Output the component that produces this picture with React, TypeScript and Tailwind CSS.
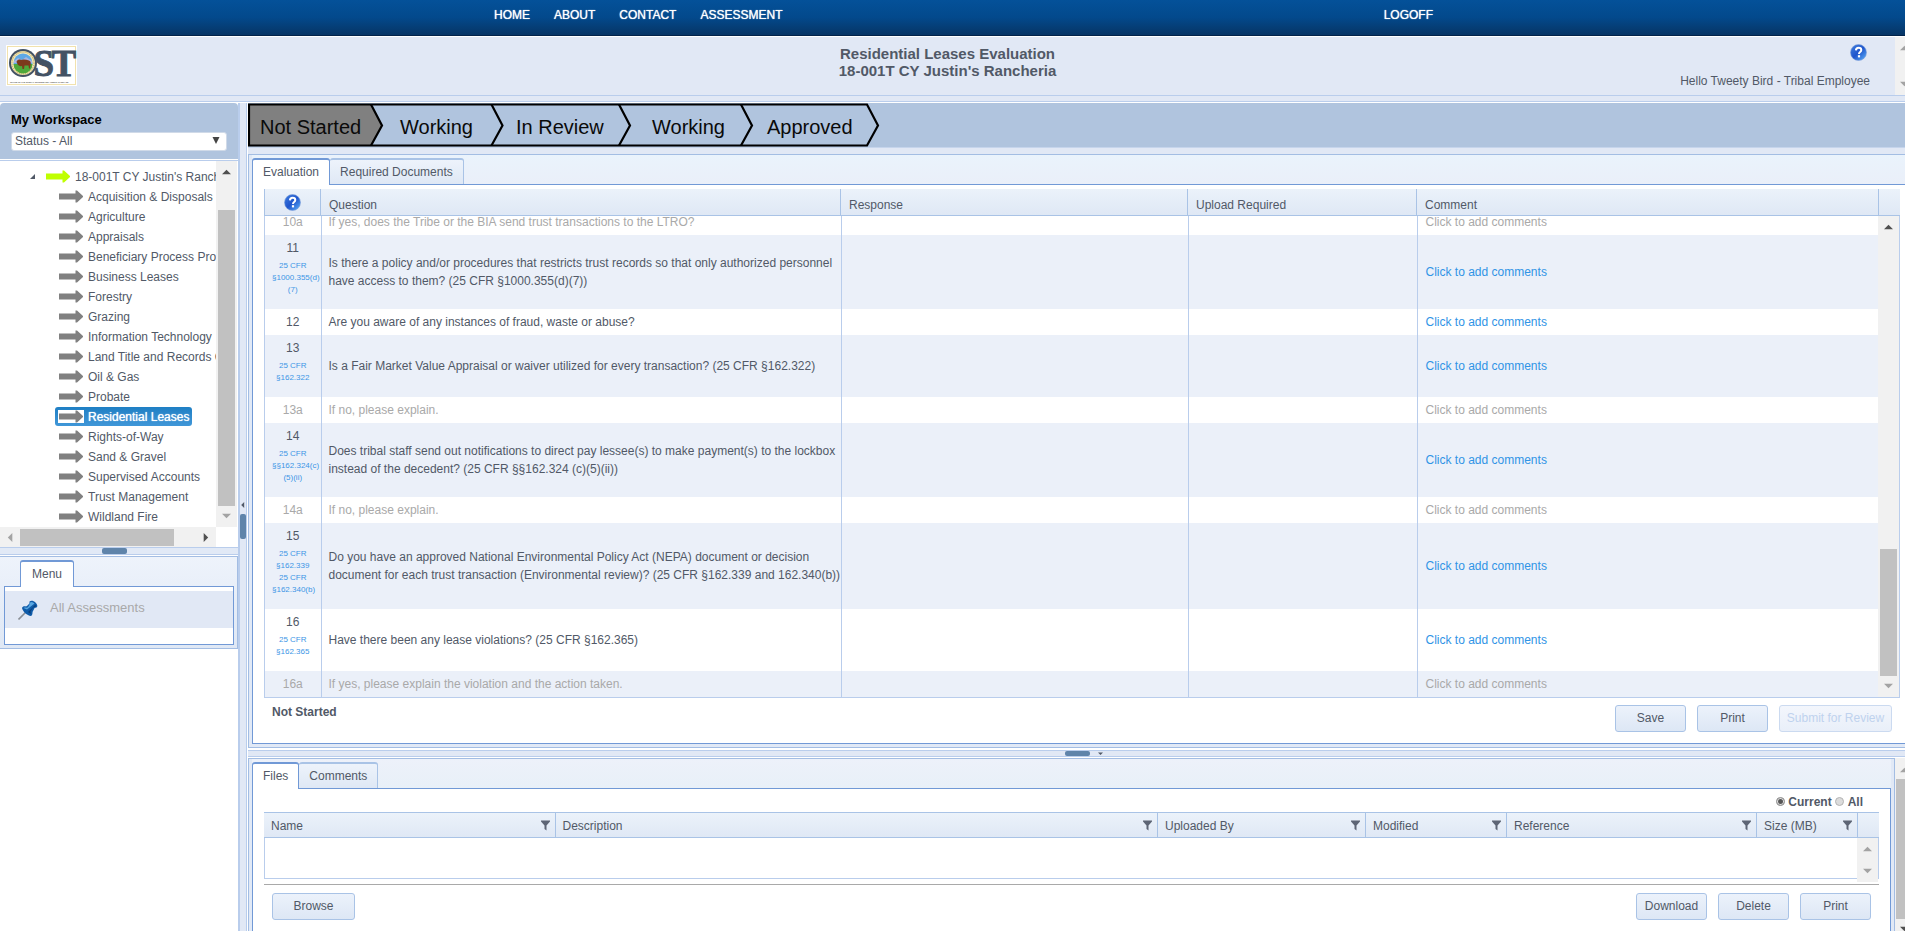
import React from "react";

const FONT = "font-['Liberation_Sans',Arial,sans-serif]";

const sections = [
  "Acquisition & Disposals",
  "Agriculture",
  "Appraisals",
  "Beneficiary Process Programs",
  "Business Leases",
  "Forestry",
  "Grazing",
  "Information Technology",
  "Land Title and Records Office",
  "Oil & Gas",
  "Probate",
  "Residential Leases",
  "Rights-of-Way",
  "Sand & Gravel",
  "Supervised Accounts",
  "Trust Management",
  "Wildland Fire",
];

type Row = { no: string; refs?: string[]; text: string; muted?: boolean; shaded?: boolean };

const rows: Row[] = [
  { no: "10a", text: "If yes, does the Tribe or the BIA send trust transactions to the LTRO?", muted: true },
  {
    no: "11",
    refs: ["25 CFR", "§1000.355(d)", "(7)"],
    text: "Is there a policy and/or procedures that restricts trust records so that only authorized personnel\nhave access to them? (25 CFR §1000.355(d)(7))",
    shaded: true,
  },
  { no: "12", text: "Are you aware of any instances of fraud, waste or abuse?" },
  {
    no: "13",
    refs: ["25 CFR", "§162.322"],
    text: "Is a Fair Market Value Appraisal or waiver utilized for every transaction? (25 CFR §162.322)",
    shaded: true,
  },
  { no: "13a", text: "If no, please explain.", muted: true },
  {
    no: "14",
    refs: ["25 CFR", "§§162.324(c)", "(5)(ii)"],
    text: "Does tribal staff send out notifications to direct pay lessee(s) to make payment(s) to the lockbox\ninstead of the decedent? (25 CFR §§162.324 (c)(5)(ii))",
    shaded: true,
  },
  { no: "14a", text: "If no, please explain.", muted: true },
  {
    no: "15",
    refs: ["25 CFR", "§162.339", "25 CFR", "§162.340(b)"],
    text: "Do you have an approved National Environmental Policy Act (NEPA) document or decision\ndocument for each trust transaction (Environmental review)? (25 CFR §162.339 and 162.340(b))",
    shaded: true,
  },
  { no: "16", refs: ["25 CFR", "§162.365"], text: "Have there been any lease violations? (25 CFR §162.365)" },
  { no: "16a", text: "If yes, please explain the violation and the action taken.", muted: true, shaded: true },
];

function HelpIcon() {
  return (
    <svg width="17" height="17" viewBox="0 0 17 17" role="img" aria-label="Help">
      <defs>
        <linearGradient id="help" x1="0" y1="0" x2="1" y2="1">
          <stop offset="0" stopColor="#3f7fe0" />
          <stop offset="0.5" stopColor="#1f55cc" />
          <stop offset="1" stopColor="#5fb4fb" />
        </linearGradient>
      </defs>
      <circle cx="8.5" cy="8.5" r="8" fill="url(#help)" stroke="#7f9fd8" strokeWidth="0.6" />
      <path
        d="M5.9 6.4c.1-1.7 1.2-2.600 2.700-2.600 1.600 0 2.700.9 2.700 2.300 0 1.900-2.300 1.900-2.300 3.800"
        fill="none"
        stroke="#fff"
        strokeWidth="2"
      />
      <rect x="7.900" y="11.200" width="2.200" height="2.200" fill="#fff" />
    </svg>
  );
}

function Arrow({ dir, color = "#a3a3a3", size = 9 }: { dir: "up" | "down" | "left" | "right"; color?: string; size?: number }) {
  const points = {
    up: "0,7 5,2 10,7",
    down: "0,3 5,8 10,3",
    left: "7,0 2,5 7,10",
    right: "3,0 8,5 3,10",
  }[dir];
  return (
    <svg width={size} height={size} viewBox="0 0 10 10" className="shrink-0" aria-hidden="true">
      <polygon points={points} fill={color} />
    </svg>
  );
}

function TreeArrow({ color }: { color: string }) {
  return (
    <svg width="26" height="13" viewBox="0 0 26 13" className="shrink-0 bg-white" aria-hidden="true">
      <path d="M1 3.500H17.500V0.500H19L25 6V7L19 12.500H17.500V9.500H1Z" fill={color} />
    </svg>
  );
}

function Funnel() {
  return (
    <svg width="9" height="11" viewBox="0 0 9 11" aria-hidden="true">
      <path d="M0 0.500H9V1.500L5.500 5.500V10.500L3.500 9V5.500L0 1.500Z" fill="#5d6575" />
    </svg>
  );
}

function Logo() {
  return (
    <svg width="71" height="41" viewBox="0 0 71 41" role="img" aria-label="Office of the Special Trustee">
      <rect width="71" height="41" fill="#fff" />
      <rect x="1.500" y="1.500" width="68" height="38" fill="#fff" stroke="#f1e2ae" />
      <g fill="#435264" stroke="#435264" strokeWidth="0.900" fontFamily="'Liberation Serif', serif" fontWeight="bold" fontSize="37">
        <text x="27.500" y="31">
          S
        </text>
        <text x="45.500" y="31">
          T
        </text>
      </g>
      <circle cx="17" cy="18" r="14" fill="#435264" />
      <circle cx="17" cy="18" r="12" fill="#f3e7b4" />
      <circle cx="17" cy="18" r="11" fill="none" stroke="#b89a4a" strokeWidth="1" strokeDasharray="1 1" />
      <circle cx="17" cy="18" r="9.500" fill="#5fa9e6" />
      <path d="M8 16l4-3 4 2 4-3 6 4v2H8z" fill="#a9b6e0" />
      <path d="M7.500 19H26.500A9.500 9.500 0 0 1 7.500 19Z" fill="#4fa83a" />
      <path
        d="M10.500 17c.5-2 2.500-3 4.500-2 2-1 5-.5 8 .5 2 .5 2 3 1.500 5l-.5 3h-1l-.5-3h-4l-.5 3.500h-1.500l-.5-3c-2 .5-3-.5-4-1z"
        fill="#7c3a1c"
      />
      <text x="4" y="37.500" fontSize="2" fill="#222" fontFamily="'Liberation Sans', sans-serif">
        OFFICE OF THE SPECIAL TRUSTEE FOR AMERICAN INDIANS
      </text>
    </svg>
  );
}

function Pin() {
  return (
    <svg width="20" height="20" viewBox="0 0 20 20" className="shrink-0" aria-hidden="true">
      <path d="M0.500 19.500L8 12" stroke="#8a8f96" strokeWidth="1.600" />
      <path d="M11.500 1.500C13 0 15.500 0.500 17.500 2.500S20 6.500 18.500 7.500L16.500 8C16 9.500 14.500 11.500 14.500 12.500C14.500 14.500 14 15.500 13 16C9 15.500 5 12 4 8C4.500 6.500 6 6 8 6.500C9 6 10.500 4.500 11.500 3.500Z" fill="#0f5ba8" />
      <path d="M12 2.500C13.500 1.500 15 2 16.500 3.500L14 5.500L9 9.500L5.500 8C7 7 8.500 8 9.500 7.500C10.500 6.500 11.500 5 12 2.500Z" fill="#58a7e2" />
      <path d="M17.500 4.500L18 6.500L15 7.500L12.500 11.500L13 14L10 12Z" fill="#093f7c" />
    </svg>
  );
}

const chevrons = [
  { label: "Not Started", x: 12 },
  { label: "Working", x: 152 },
  { label: "In Review", x: 268 },
  { label: "Working", x: 404 },
  { label: "Approved", x: 519 },
];

function Workflow() {
  return (
    <svg width="632" height="44" viewBox="0 0 632 44" role="img" aria-label="Workflow status">
      <path d="M1 1.500H123L134 22.500L123 42.500H1Z" fill="#808080" />
      <g fill="none" stroke="#000" strokeWidth="2.200">
        <path d="M1 1.500H619L630 22.500L619 42.500H1Z" />
        <path d="M123 1.500L134 22.500L123 42.500" />
        <path d="M243.500 1.500L254.500 22.500L243.500 42.500" />
        <path d="M371 1.500L382 22.500L371 42.500" />
        <path d="M493 1.500L504 22.500L493 42.500" />
      </g>
      <g fontFamily="'Liberation Sans', Arial, sans-serif" fontSize="20" fill="#0a0a0a">
        {chevrons.map((c) => (
          <text key={c.x} x={c.x} y="31">
            {c.label}
          </text>
        ))}
      </g>
    </svg>
  );
}

function Button({ children, className = "w-[71px]", disabled }: { children: React.ReactNode; className?: string; disabled?: boolean }) {
  return (
    <button
      type="button"
      disabled={disabled}
      className={`h-[27px] rounded-[3px] border border-[#a9c3e6] bg-gradient-to-b from-[#ecf2fb] to-[#dde7f5] pb-px text-xs whitespace-nowrap disabled:border-[#cbdaf0] disabled:from-[#f3f6fc] disabled:to-[#e9eff9] disabled:text-[#bfd2ee] ${className}`}
    >
      {children}
    </button>
  );
}

function Tab({ children, active }: { children: React.ReactNode; active?: boolean }) {
  return (
    <button
      type="button"
      role="tab"
      aria-selected={!!active}
      className={
        active
          ? "-mb-px h-[27px] rounded-t-[3px] border border-t-2 border-b-0 border-[#7199d6] bg-white px-[10px] pb-[2px] text-xs"
          : "h-[26px] rounded-t-[3px] border border-t-2 border-b-0 border-l-0 border-[#a9c3e6] bg-gradient-to-b from-[#edf3fb] to-[#dfe8f5] px-[10px] pb-px text-xs"
      }
    >
      {children}
    </button>
  );
}

function QuestionCols() {
  return (
    <colgroup>
      <col className="w-[56px]" />
      <col className="w-[520px]" />
      <col className="w-[347px]" />
      <col className="w-[229px]" />
      <col />
    </colgroup>
  );
}

function EvaluationPanel() {
  const th = "border-r border-[#a9c3e6] px-2 pt-[5px] text-left font-normal";
  return (
    <section className="flex flex-col border-t border-b border-l border-[#a3bde3] bg-[#e1e9f6] pb-[3px] pl-[3px]">
      <div role="tablist" className="flex h-[30px] items-end border-b border-[#7199d6] bg-gradient-to-b from-[#eaf3fc] to-[#eaeff9]">
        <Tab active>Evaluation</Tab>
        <Tab>Required Documents</Tab>
      </div>
      <div className="border-b border-l border-[#7199d6] bg-white pt-1 pr-[5px] pl-[11px]">
        <div className="flex border-b border-[#a9c3e6] bg-gradient-to-b from-[#ebf2fa] to-[#dfe8f5]">
          <table className="h-[26px] min-w-0 flex-1 table-fixed border-l border-[#a9c3e6]">
            <QuestionCols />
            <thead>
              <tr>
                <th className="border-r border-[#a9c3e6] p-0">
                  <span className="flex justify-center">
                    <HelpIcon />
                  </span>
                </th>
                <th className={th}>Question</th>
                <th className={th}>Response</th>
                <th className={th}>Upload Required</th>
                <th className={th}>Comment</th>
              </tr>
            </thead>
          </table>
          <div className="w-[21px]" />
        </div>
        <div className="flex h-[482px] border-r border-b border-l border-[#b9cdec]">
          <div className="flex min-w-0 flex-1 flex-col justify-end overflow-hidden">
            <table className="w-full shrink-0 table-fixed leading-[18px]">
              <QuestionCols />
              <tbody>
                {rows.map((r) => {
                  const td = "border-r border-[#b9cdec]";
                  return (
                    <tr key={r.no} className={`${r.shaded ? "bg-[#ebf0f9]" : "bg-white"} ${r.muted ? "text-[#a9a9a9]" : ""}`}>
                      <td className={`${td} px-[7px] py-1 text-center align-top`}>
                        {r.no}
                        {r.refs && (
                          <div className="pt-[3px] pb-[9px] text-[8px] leading-[12px] text-[#3c96e6]">
                            {r.refs.map((ref, i) => (
                              <a key={i} href="#cfr" className="block whitespace-nowrap">
                                {ref}
                              </a>
                            ))}
                          </div>
                        )}
                      </td>
                      <td className={`${td} pl-[7px] whitespace-pre`}>{r.text}</td>
                      <td className={td} />
                      <td className={td} />
                      <td className="px-2">
                        <a href="#comment" className={r.muted ? "text-[#a9a9a9]" : "text-[#3094e6]"}>
                          Click to add comments
                        </a>
                      </td>
                    </tr>
                  );
                })}
              </tbody>
            </table>
          </div>
          <div className="flex w-[21px] flex-col items-center bg-[#f1f1f1] py-[7px]">
            <Arrow dir="up" color="#505050" />
            <div className="flex-1" />
            <div className="mb-[5px] h-[127px] w-[17px] bg-[#c1c1c1]" />
            <Arrow dir="down" />
          </div>
        </div>
        <div className="flex items-start gap-[11px] pt-[7px] pr-2 pb-[11px] pl-2">
          <span className="flex-1 leading-[14px] font-bold">Not Started</span>
          <Button>Save</Button>
          <Button>Print</Button>
          <Button className="w-[113px]" disabled>
            Submit for Review
          </Button>
        </div>
      </div>
    </section>
  );
}

const fileColumns: { name: string; width: string }[] = [
  { name: "Name", width: "w-[291px]" },
  { name: "Description", width: "" },
  { name: "Uploaded By", width: "w-[208px]" },
  { name: "Modified", width: "w-[141px]" },
  { name: "Reference", width: "w-[250px]" },
  { name: "Size (MB)", width: "w-[101px]" },
];

function FilesPanel() {
  return (
    <div className="flex min-h-0 flex-1 overflow-hidden">
      <section className="flex min-w-0 flex-1 flex-col border-t border-r border-l border-[#a3bde3] bg-[#e1e9f6] px-[3px]">
        <div role="tablist" className="flex h-[30px] shrink-0 items-end border-b border-[#7199d6] bg-gradient-to-b from-[#edf1fa] to-[#e8f0f8]">
          <Tab active>Files</Tab>
          <Tab>Comments</Tab>
        </div>
        <div className="flex-1 border-r border-l border-[#7199d6] bg-white pr-[11px] pl-[11px]">
          <div className="flex h-[23px] items-center justify-end pt-[2px] pr-4 font-bold">
            <label className="flex items-center gap-[3px]">
              <input
                type="radio"
                name="scope"
                defaultChecked
                className="h-[9px] w-[9px] appearance-none rounded-full border border-[#a0a0a0] bg-[#555] shadow-[inset_0_0_0_1px_#e4e4e4]"
              />
              Current
            </label>
            <label className="ml-[3px] flex items-center gap-1">
              <input type="radio" name="scope" className="h-[9px] w-[9px] appearance-none rounded-full border border-[#b4b4b4] bg-[#dcdcdc]" />
              All
            </label>
          </div>
          <div className="flex border-t border-b border-[#a9c3e6] bg-gradient-to-b from-[#ebf2fa] to-[#dfe8f5]">
            <table className="h-[24px] min-w-0 flex-1 table-fixed">
              <colgroup>
                {fileColumns.map((c) => (
                  <col key={c.name} className={c.width} />
                ))}
              </colgroup>
              <thead>
                <tr>
                  {fileColumns.map((c) => (
                    <th key={c.name} className="border-r border-[#a9c3e6] p-0 pt-px pr-[5px] pl-[7px] font-normal">
                      <span className="flex items-center justify-between">
                        {c.name}
                        <Funnel />
                      </span>
                    </th>
                  ))}
                </tr>
              </thead>
            </table>
            <div className="w-[21px]" />
          </div>
          <div className="flex h-[41px] justify-end border-r border-b border-l border-[#b9cdec]">
            <div className="flex h-[44px] w-[21px] flex-col items-center justify-between bg-[#f1f1f1] py-[7px]">
              <Arrow dir="up" />
              <Arrow dir="down" />
            </div>
          </div>
          <div className="mt-[5px] flex gap-[11px] border-t border-[#a9a9a9] px-2 pt-2">
            <Button className="w-[83px]">Browse</Button>
            <div className="flex-1" />
            <Button>Download</Button>
            <Button>Delete</Button>
            <Button>Print</Button>
          </div>
        </div>
      </section>
      <div className="flex w-[10px] flex-col overflow-hidden bg-[#f1f1f1] pt-2 pl-[5px]">
        <Arrow dir="up" />
        <div className="mt-1 -ml-1 h-[140px] w-4 shrink-0 bg-[#c1c1c1]" />
        <div className="mt-[5px]">
          <Arrow dir="down" color="#505050" />
        </div>
      </div>
    </div>
  );
}

function Sidebar() {
  return (
    <aside className="flex w-[238px] shrink-0 flex-col bg-white">
      <div className="h-[56px] rounded-t-[4px] bg-[#b0c4de] px-[11px] pt-2">
        <label htmlFor="status" className="block text-[13px] leading-[18px] font-bold text-black">
          My Workspace
        </label>
        <div className="relative mt-[3px]">
          <select id="status" className="block h-[19px] w-full appearance-none rounded-[3px] border border-[#d0dae8] bg-white pl-[3px] text-xs leading-[17px]">
            <option>Status - All</option>
          </select>
          <svg width="8" height="8" viewBox="0 0 8 8" className="pointer-events-none absolute top-[5px] right-[7px]" aria-hidden="true">
            <path d="M0.500 0H7.500L4 7Z" fill="#444" />
          </svg>
        </div>
      </div>
      <div className="mt-px flex h-[367px] border-t border-[#b9cdec]">
        <div className="min-w-0 flex-1 overflow-hidden pt-[5px]">
          <div className="flex h-5 items-center pl-[30px] whitespace-nowrap">
            <svg width="5" height="5" viewBox="0 0 5 5" className="mr-[10px] shrink-0" aria-hidden="true">
              <path d="M5 0V5H0Z" fill="#515967" />
            </svg>
            <TreeArrow color="#bfff00" />
            <span className="pt-[2px] pl-1">18-001T CY Justin's Rancheria</span>
          </div>
          <ul>
            {sections.map((s) => (
              <li key={s} className="flex h-5 items-center pl-[55px] whitespace-nowrap">
                <a
                  href="#section"
                  className={
                    s === "Residential Leases"
                      ? "flex h-[19px] items-center rounded-[3px] bg-gradient-to-b from-[#1e7fc4] to-[#4097d8] px-[3px] text-white [text-shadow:0_0_1px_#fff]"
                      : "flex h-[19px] items-center px-[3px]"
                  }
                >
                  <TreeArrow color="#808080" />
                  <span className="pt-[2px] pl-1">{s}</span>
                </a>
              </li>
            ))}
          </ul>
        </div>
        <div className="mr-px flex w-[21px] shrink-0 flex-col items-center bg-[#f1f1f1] py-[7px]">
          <Arrow dir="up" color="#505050" />
          <div className="mt-[33px] mb-[5px] w-[17px] flex-1 bg-[#c1c1c1]" />
          <Arrow dir="down" />
        </div>
      </div>
      <div className="mr-[22px] flex h-5 items-center bg-[#f1f1f1] px-[6px]">
        <Arrow dir="left" />
        <div className="ml-[5px] h-[17px] w-[154px] bg-[#c1c1c1]" />
        <div className="flex-1" />
        <Arrow dir="right" color="#505050" />
      </div>
      <div className="flex h-2 justify-center border-t border-b border-[#b9cdec] bg-[#e1e9f6] pr-[10px]">
        <div className="w-[25px] rounded-[2px] bg-[#5f84aa]" />
      </div>
      <div className="mt-px border-t border-r border-b border-[#a3bde3] bg-gradient-to-b from-[#eef3fb] to-[#dfe8f5] pt-[3px] pr-[3px] pb-[3px] pl-1">
        <div role="tablist" className="flex pl-4">
          <button
            type="button"
            role="tab"
            aria-selected="true"
            className="relative -mb-px h-[27px] rounded-t-[3px] border border-t-2 border-b-0 border-[#7199d6] bg-white px-[11px] pb-[2px] text-xs"
          >
            Menu
          </button>
        </div>
        <div className="border border-[#7199d6] bg-white pt-1 pb-4">
          <a href="#all" className="flex h-[37px] items-center bg-[#e1e8f5] pl-[13px] text-[13px] text-[#a9a9a9]">
            <Pin />
            <span className="pb-[3px] pl-3">All Assessments</span>
          </a>
        </div>
      </div>
    </aside>
  );
}

export default function App() {
  return (
    <div className={`flex h-screen flex-col overflow-hidden bg-white text-xs text-[#515967] ${FONT}`}>
      <nav className="flex h-9 shrink-0 items-start gap-6 border-b border-[#02234a] bg-gradient-to-b from-[#045199] via-[#03498c] to-[#063565] pt-[7px] pl-[494px] text-white [text-shadow:0_0_1px_#fff]">
        <a href="#home">HOME</a>
        <a href="#about">ABOUT</a>
        <a href="#contact">CONTACT</a>
        <a href="#assessment">ASSESSMENT</a>
        <a href="#logoff" className="mr-[472px] ml-auto">
          LOGOFF
        </a>
      </nav>
      <header className="mt-px flex h-[59px] shrink-0 border-b border-[#b9cdec] bg-[#e1e8f5]">
        <div className="grid flex-1 grid-cols-[1fr_auto_1fr]">
          <div className="pt-2 pl-[6px]">
            <Logo />
          </div>
          <h1 className="pt-2 text-center text-[15px] leading-[17px] font-bold">
            Residential Leases Evaluation
            <br />
            18-001T CY Justin's Rancheria
          </h1>
          <div className="flex flex-col items-end pt-[7px] pr-[25px]">
            <div className="pr-[3px]">
              <HelpIcon />
            </div>
            <span className="mt-3">Hello Tweety Bird - Tribal Employee</span>
          </div>
        </div>
        <div className="flex w-[10px] flex-col justify-between overflow-hidden bg-[#f1f1f1] py-[7px] pl-[5px]">
          <Arrow dir="up" />
          <Arrow dir="down" />
        </div>
      </header>
      <div className="h-[6px] shrink-0 border-b border-[#b9cdec] bg-[#e1e8f5]" />
      <div className="mt-px flex min-h-0 flex-1">
        <Sidebar />
        <div className="flex w-[9px] shrink-0 flex-col items-center border-r border-l-2 border-[#b9cdec] bg-[#e1e8f5] pt-[399px]">
          <Arrow dir="left" color="#515967" size={6} />
          <div className="mt-[6px] h-[25px] w-full rounded-[2px] bg-[#5f84aa]" />
        </div>
        <main className="ml-px flex min-w-0 flex-1 flex-col">
          <div className="h-[45px] shrink-0 overflow-hidden border-b border-[#c6d5ec] bg-[#b0c4de]">
            <Workflow />
          </div>
          <div className="h-[6px] shrink-0 bg-[#e1e8f5]" />
          <EvaluationPanel />
          <div className="mt-[2px] mb-px flex h-[7px] shrink-0 items-center justify-center gap-2 border-t border-b border-[#b9cdec] bg-[#e1e8f5]">
            <div className="ml-[14px] h-[5px] w-[25px] rounded-[2px] bg-[#5f84aa]" />
            <Arrow dir="down" color="#515967" size={5} />
          </div>
          <FilesPanel />
        </main>
      </div>
    </div>
  );
}
